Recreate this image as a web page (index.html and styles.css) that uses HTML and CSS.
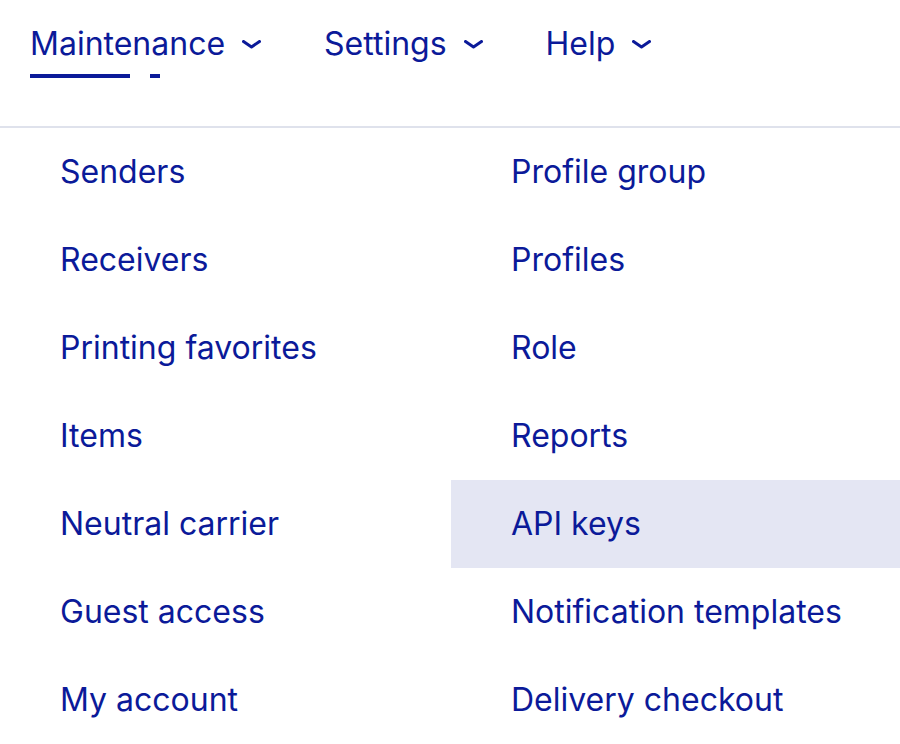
FILE: index.html
```html
<!DOCTYPE html>
<html>
<head>
<meta charset="utf-8">
<link rel="stylesheet" href="styles.css">
</head>
<body>
<nav class="topnav">
  <div class="navitem active">
    <div class="navlabel">Maintenance
      <svg class="chev" width="19" height="9" viewBox="0 0 19 9"><path d="M1.5 1.5 L9.5 7 L17.5 1.5" fill="none" stroke="currentColor" stroke-width="3" stroke-linecap="round" stroke-linejoin="round"/></svg>
    </div>
    <div class="underline"><span class="bar long"></span><span class="bar short"></span></div>
  </div>
  <div class="navitem">
    <div class="navlabel">Settings
      <svg class="chev" width="19" height="9" viewBox="0 0 19 9"><path d="M1.5 1.5 L9.5 7 L17.5 1.5" fill="none" stroke="currentColor" stroke-width="3" stroke-linecap="round" stroke-linejoin="round"/></svg>
    </div>
  </div>
  <div class="navitem">
    <div class="navlabel">Help
      <svg class="chev" width="19" height="9" viewBox="0 0 19 9"><path d="M1.5 1.5 L9.5 7 L17.5 1.5" fill="none" stroke="currentColor" stroke-width="3" stroke-linecap="round" stroke-linejoin="round"/></svg>
    </div>
  </div>
</nav>
<div class="dropdown">
  <ul class="col">
    <li class="item">Senders</li>
    <li class="item">Receivers</li>
    <li class="item">Printing favorites</li>
    <li class="item">Items</li>
    <li class="item">Neutral carrier</li>
    <li class="item">Guest access</li>
    <li class="item">My account</li>
  </ul>
  <ul class="col">
    <li class="item">Profile group</li>
    <li class="item">Profiles</li>
    <li class="item">Role</li>
    <li class="item">Reports</li>
    <li class="item hover">API keys</li>
    <li class="item">Notification templates</li>
    <li class="item">Delivery checkout</li>
  </ul>
</div>
</body>
</html>
```

FILE: styles.css
```css
html, body {
  margin: 0;
  padding: 0;
  background: #ffffff;
}
body {
  font-family: Inter, "Noto Sans", sans-serif;
  color: #0b1a99;
  width: 900px;
  height: 744px;
  overflow: hidden;
}
.topnav {
  display: flex;
  align-items: flex-start;
  gap: 63px;
  height: 126px;
  padding-left: 30px;
  border-bottom: 2px solid #dfe2ec;
  box-sizing: content-box;
}
.navitem {
  padding-top: 24px;
  display: flex;
  flex-direction: column;
}
.navlabel {
  display: flex;
  align-items: center;
  gap: 17px;
  font-size: 32px;
  line-height: 40px;
  height: 40px;
}
.chev {
  display: block;
}
.underline {
  display: flex;
  gap: 20px;
  margin-top: 10px;
}
.bar {
  display: block;
  height: 4px;
  background: #0b1a99;
}
.bar.long { width: 100px; }
.bar.short { width: 10px; }
.dropdown {
  display: grid;
  grid-template-columns: 451px 451px;
}
.col {
  list-style: none;
  margin: 0;
  padding: 0;
}
.item {
  height: 88px;
  display: flex;
  align-items: center;
  padding-left: 60px;
  font-size: 32px;
  line-height: 40px;
}
.item.hover {
  background: #e4e6f3;
}
```
